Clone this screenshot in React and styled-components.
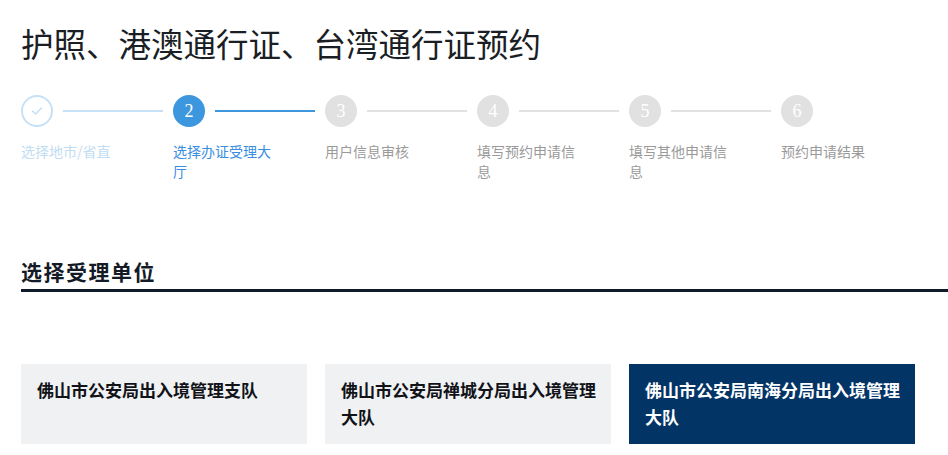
import React from "react";
import styled, { createGlobalStyle } from "styled-components";

const GlobalStyle = createGlobalStyle`
  html, body {
    margin: 0;
    padding: 0;
    background: #ffffff;
  }
  body {
    font-family: "Noto Sans CJK SC", "Noto Sans", "Liberation Sans", sans-serif;
    color: #1b1f27;
    overflow: hidden;
  }
`;

const Page = styled.div`
  padding: 22px 0 0 21px;
  width: 927px;
`;

const Title = styled.h1`
  margin: 0;
  font-size: 32.5px;
  font-weight: 400;
  line-height: 42px;
  color: #1a1e25;
`;

const Steps = styled.ol`
  list-style: none;
  margin: 31px 0 0;
  padding: 0;
  display: flex;
`;

const Step = styled.li`
  width: 152px;
  flex: none;
  display: flex;
  flex-direction: column;
`;

const Track = styled.div`
  display: flex;
  align-items: center;
  height: 32px;
`;

const palette = {
  done: { ring: "#c6e1f6", fill: "#ffffff", text: "#c6e1f6", line: "#c6e1f6", label: "#c2dcf2" },
  active: { ring: "#3d97de", fill: "#3d97de", text: "#ffffff", line: "#3d97de", label: "#3a8ee0" },
  todo: { ring: "#e1e1e1", fill: "#e1e1e1", text: "#ffffff", line: "#e1e1e1", label: "#9a9a9a" },
};

const Dot = styled.span`
  box-sizing: border-box;
  width: 32px;
  height: 32px;
  flex: none;
  border-radius: 50%;
  border: 2px solid ${(p) => palette[p.$state].ring};
  background: ${(p) => palette[p.$state].fill};
  color: ${(p) => palette[p.$state].text};
  display: flex;
  align-items: center;
  justify-content: center;
  font-family: "Liberation Serif", "DejaVu Serif", serif;
  font-size: 18px;
  line-height: 1;
`;

const Connector = styled.span`
  height: 2px;
  width: 100px;
  margin-left: 10px;
  background: ${(p) => palette[p.$state].line};
`;

const Label = styled.span`
  margin-top: 14px;
  width: 106px;
  font-size: 14px;
  line-height: 20px;
  color: ${(p) => palette[p.$state].label};
`;

const Section = styled.section`
  margin-top: 75px;
`;

const SectionTitle = styled.h2`
  margin: 0;
  padding-bottom: 3px;
  font-size: 21px;
  font-weight: 700;
  letter-spacing: 1.5px;
  line-height: 30px;
  color: #141a26;
  border-bottom: 3px solid #111a29;
`;

const Cards = styled.div`
  display: grid;
  grid-template-columns: repeat(3, 286px);
  column-gap: 18px;
  margin-top: 72px;
`;

const Card = styled.div`
  box-sizing: border-box;
  height: 80px;
  padding: 12px 12px 0 16px;
  cursor: pointer;
  font-size: 17px;
  font-weight: 700;
  line-height: 27px;
  color: ${(p) => (p.$selected ? "#ffffff" : "#111318")};
  background: ${(p) => (p.$selected ? "#033466" : "#f0f1f3")};
`;

const Check = () => (
  <svg width="14" height="14" viewBox="0 0 14 14" fill="none">
    <path d="M2.5 7.2 L5.6 10 L11.5 4" stroke="#c6e1f6" strokeWidth="1.6" strokeLinecap="round" strokeLinejoin="round" />
  </svg>
);

const steps = [
  { label: "选择地市/省直", state: "done" },
  { label: "选择办证受理大厅", state: "active" },
  { label: "用户信息审核", state: "todo" },
  { label: "填写预约申请信息", state: "todo" },
  { label: "填写其他申请信息", state: "todo" },
  { label: "预约申请结果", state: "todo" },
];

const offices = [
  { name: "佛山市公安局出入境管理支队", selected: false },
  { name: "佛山市公安局禅城分局出入境管理大队", selected: false },
  { name: "佛山市公安局南海分局出入境管理大队", selected: true },
];

export default function App() {
  return (
    <>
      <GlobalStyle />
      <Page>
        <Title>护照、港澳通行证、台湾通行证预约</Title>
        <Steps>
          {steps.map((s, i) => (
            <Step key={s.label}>
              <Track>
                <Dot $state={s.state}>{s.state === "done" ? <Check /> : i + 1}</Dot>
                {i < steps.length - 1 && <Connector $state={s.state} />}
              </Track>
              <Label $state={s.state}>{s.label}</Label>
            </Step>
          ))}
        </Steps>
        <Section>
          <SectionTitle>选择受理单位</SectionTitle>
          <Cards>
            {offices.map((o) => (
              <Card key={o.name} role="button" $selected={o.selected}>
                {o.name}
              </Card>
            ))}
          </Cards>
        </Section>
      </Page>
    </>
  );
}
